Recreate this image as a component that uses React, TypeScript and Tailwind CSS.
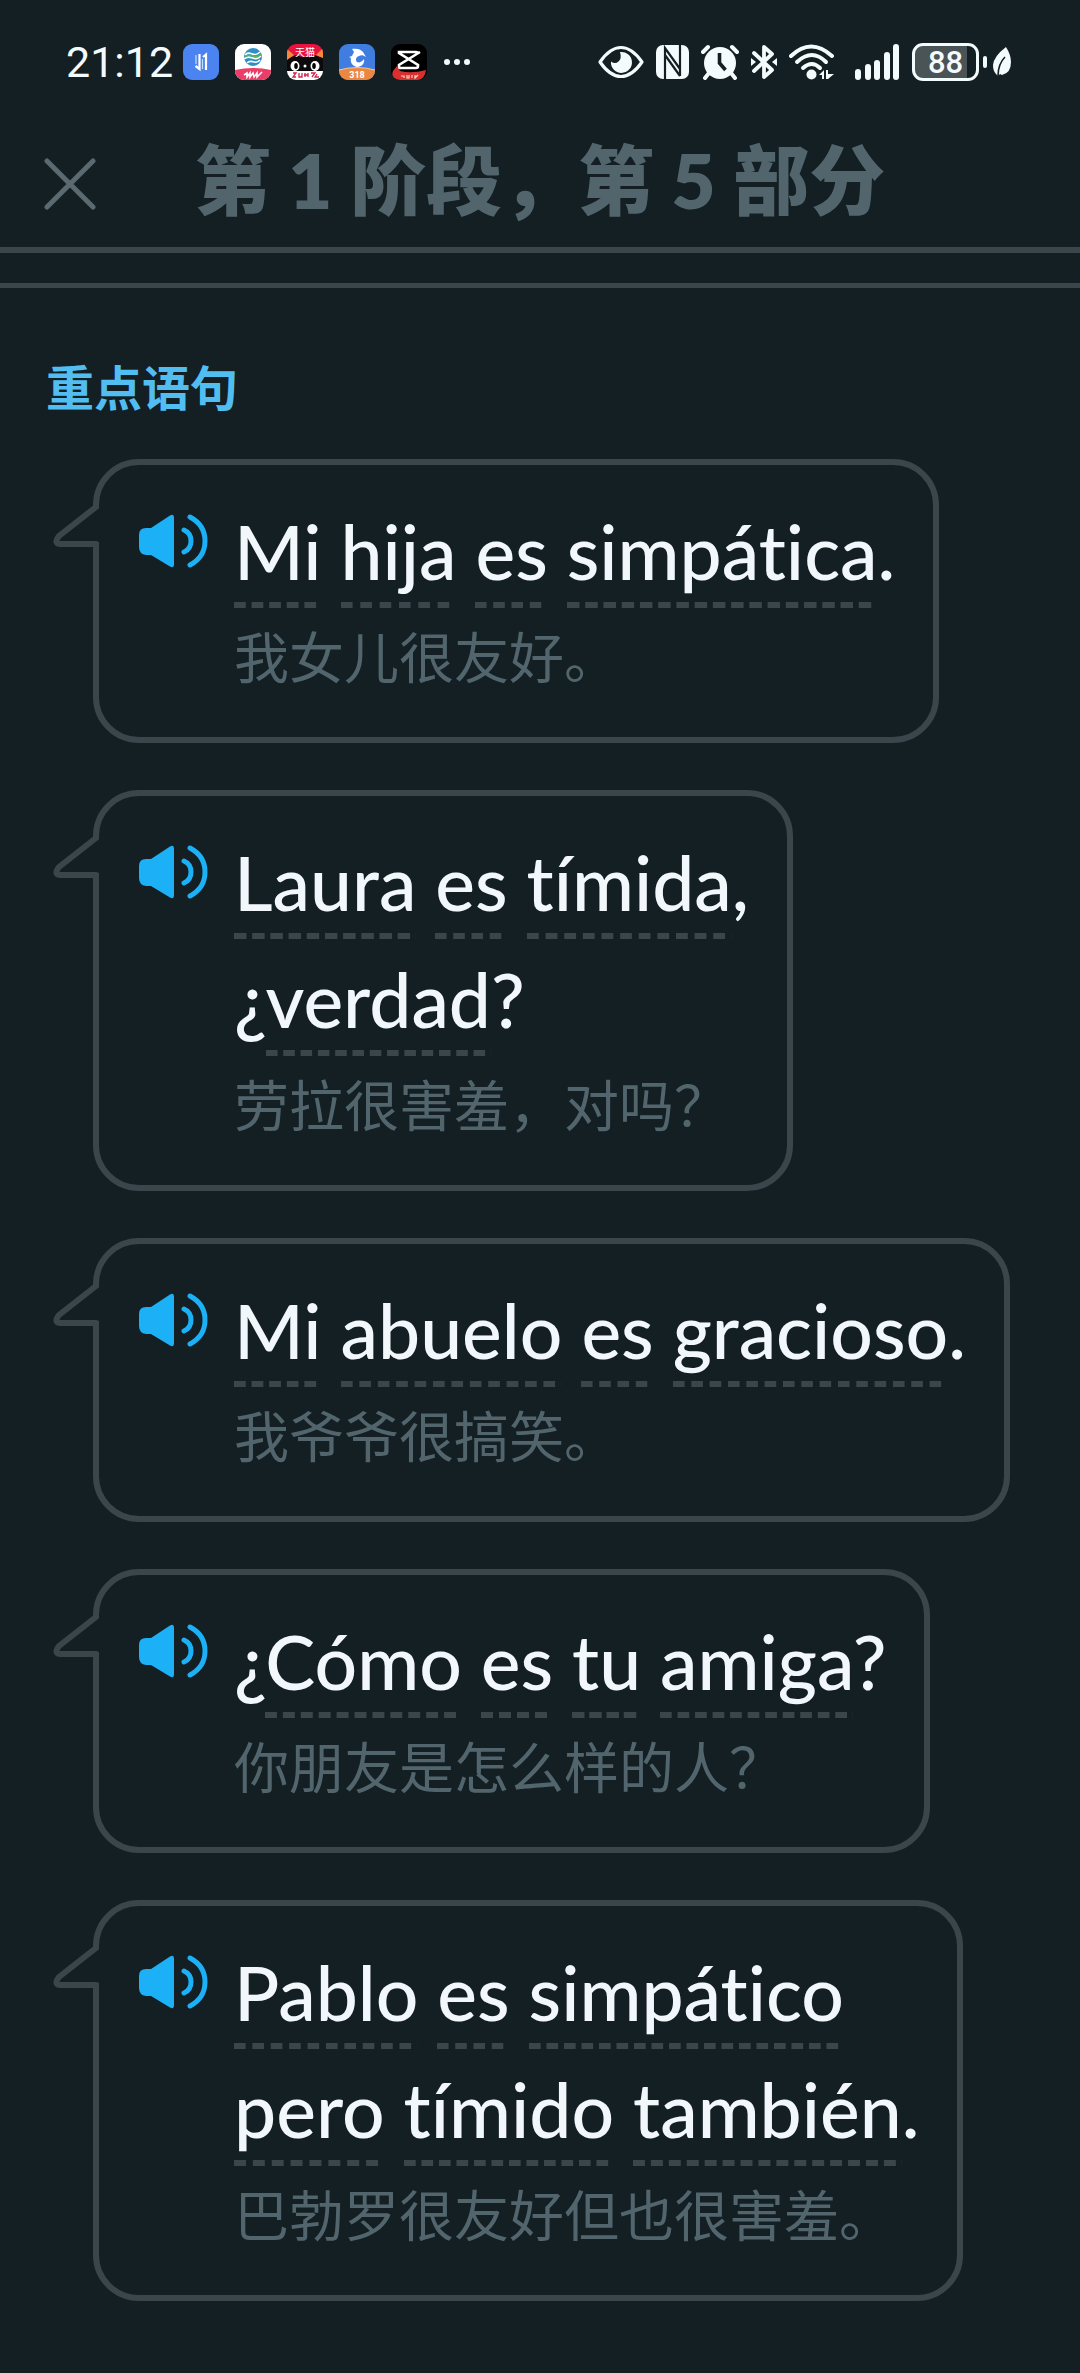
import type { ReactNode } from "react";

type Word = { text: string; hint: boolean };
type Sentence = { lines: Word[][]; translation: string };

const w = (text: string): Word => ({ text, hint: true });
const p = (text: string): Word => ({ text, hint: false });

const sentences: Sentence[] = [
  {
    lines: [[w("Mi"), p(" "), w("hija"), p(" "), w("es"), p(" "), w("simpática"), p(".")]],
    translation: "我女儿很友好。",
  },
  {
    lines: [
      [w("Laura"), p(" "), w("es"), p(" "), w("tímida"), p(",")],
      [p("¿"), w("verdad"), p("?")],
    ],
    translation: "劳拉很害羞，对吗？",
  },
  {
    lines: [[w("Mi"), p(" "), w("abuelo"), p(" "), w("es"), p(" "), w("gracioso"), p(".")]],
    translation: "我爷爷很搞笑。",
  },
  {
    lines: [[p("¿"), w("Cómo"), p(" "), w("es"), p(" "), w("tu"), p(" "), w("amiga"), p("?")]],
    translation: "你朋友是怎么样的人？",
  },
  {
    lines: [
      [w("Pablo"), p(" "), w("es"), p(" "), w("simpático")],
      [w("pero"), p(" "), w("tímido"), p(" "), w("también"), p(".")],
    ],
    translation: "巴勃罗很友好但也很害羞。",
  },
];

function AppBadge({ className, children }: { className: string; children: ReactNode }) {
  return (
    <svg viewBox="0 0 36 36" aria-hidden="true" className={`size-9 shrink-0 rounded-[9px] ${className}`}>
      {children}
    </svg>
  );
}

function StatusBar() {
  return (
    <div className="flex h-[124px] items-center justify-between pr-[69px] pl-[66px] text-[#f4fbfd]">
      <div className="flex items-center gap-4">
        <span className="-mr-1.5 font-['Roboto',sans-serif] text-[43px] leading-none">21:12</span>
        <AppBadge className="bg-[#4b84f0]">
          <path d="M16.500 10v15l-4-3M20 13l3-2.500V26" fill="none" stroke="#fff" strokeWidth="2.200" />
          <path d="M13 11v9M19.500 15v10" fill="none" stroke="#c8dcff" strokeWidth="1.200" />
        </AppBadge>
        <AppBadge className="bg-white">
          <circle cx="18" cy="13" r="9" fill="#2f8fc4" />
          <path d="M10 11c5-6 8 4 15-3M9 15c6-6 10 4 17-3M12 19c5-5 8 3 13-3" fill="none" stroke="#fff" strokeWidth="1.600" />
          <path d="M10 13c6-6 9 4 16-3" fill="none" stroke="#58b947" strokeWidth="1.500" />
          <path d="M0 26q18-4 36 0v10H0z" fill="#ec3d68" />
          <path d="M9 31l3-2v4l3-4v4l3-4 1 4 3-4v4l5-5" fill="none" stroke="#fff" strokeWidth="1.600" />
        </AppBadge>
        <AppBadge className="bg-[#0b0b0b]">
          <path d="M0 0h36v14l-9-3q-9 4-18 0L0 15z" fill="#e8143f" />
          <path d="M0 5l7 6-7 5zM36 4l-7 7 7 3z" fill="#f08a3c" />
          <text x="18" y="12" textAnchor="middle" fontSize="10" fill="#fff" fontFamily="Noto Sans CJK SC, sans-serif">天猫</text>
          <ellipse cx="8" cy="22" rx="4.500" ry="5" fill="#fff" />
          <ellipse cx="28" cy="22" rx="4.500" ry="5" fill="#fff" />
          <ellipse cx="9" cy="22" rx="1.800" ry="3" fill="#000" />
          <ellipse cx="27" cy="22" rx="1.800" ry="3" fill="#000" />
          <circle cx="18" cy="22" r="1.500" fill="#fff" />
          <path d="M0 27h36v9H0z" fill="#fff" />
          <path d="M6 29h3l-3 4h3M12 29v4h3v-4M18 29v4M17 31h4M21 29v4M24 29h4l-3 4M30 30l-2 3h4" fill="none" stroke="#d4234f" strokeWidth="1.300" />
        </AppBadge>
        <AppBadge className="bg-[#3f7de0]">
          <path d="M13 5c4-1 9 0 11 3 1 2 2 3 3 5-3-2-5-2-7-1-3 1-4 4-2 6 2 1 5 0 7-3 1 4-2 8-7 8-5-1-7-5-6-9l-2-1 3-1 2-4z" fill="#fff" />
          <path d="M0 26q18-5 36 0v10H0z" fill="#ec8742" />
          <path d="M0 26q18-5 36 0" fill="none" stroke="#f7c98b" strokeWidth="1" />
          <text x="18" y="34" textAnchor="middle" fontSize="9" fontWeight="700" fill="#fff" fontFamily="Roboto, sans-serif">318</text>
        </AppBadge>
        <AppBadge className="bg-black">
          <path d="M29 8l-21 13v3h17q2 0 2-2v-1L8 9V8h17q2 0 2 2" fill="none" stroke="#fff" strokeWidth="2.600" />
          <path d="M2 27l4-5 3 5q12 3 26-1-1 8-7 10H3q-3-4-1-9z" fill="#d92f2f" />
          <path d="M10 32h3v2M16 31v3h2v-3M21 31v3M24 31v3l3-3" fill="none" stroke="#fbd6c0" strokeWidth="1.200" />
        </AppBadge>
        <svg viewBox="0 0 28 8" aria-hidden="true" className="h-2 w-7" fill="currentColor">
          <circle cx="4" cy="4" r="3" />
          <circle cx="14" cy="4" r="3" />
          <circle cx="24" cy="4" r="3" />
        </svg>
      </div>
      <div className="flex items-center gap-3">
        <svg viewBox="0 0 46 34" aria-hidden="true" className="h-[34px] w-[46px]">
          <path d="M2 17Q12 2.500 23 2.500T44 17Q34 31.500 23 31.500T2 17Z" fill="none" stroke="currentColor" strokeWidth="3.200" strokeLinejoin="round" />
          <path d="M22 7a10.500 10.500 0 1 1-9 9.500q4 3 7.500 0t1.500-9.500z" fill="currentColor" />
        </svg>
        <svg viewBox="0 0 33 34" aria-hidden="true" className="h-[34px] w-[33px]">
          <rect width="33" height="34" rx="7" fill="currentColor" />
          <path d="M9 34V3l15 21V0M9 12v22M24 31L9 10M24 31V0" fill="none" stroke="#131f23" strokeWidth="2.200" />
        </svg>
        <svg viewBox="0 0 38 36" aria-hidden="true" className="h-9 w-[38px]">
          <circle cx="19" cy="19" r="16" fill="currentColor" />
          <path d="M2 8l5-5M36 8l-5-5M8 29l-4 5M30 29l4 5" fill="none" stroke="currentColor" strokeWidth="4" strokeLinecap="round" />
          <path d="M18.500 9v10l6 7" fill="none" stroke="#131f23" strokeWidth="3.600" />
        </svg>
        <svg viewBox="0 0 26 36" aria-hidden="true" className="h-9 w-[26px]">
          <path d="M3 9l18 17-8 7V3l8 7L3 27" fill="none" stroke="currentColor" strokeWidth="3.800" strokeLinejoin="round" strokeLinecap="round" />
          <path d="M0 14l5 4-5 4zM26 14l-5 4 5 4z" fill="currentColor" />
        </svg>
        <svg viewBox="0 0 46 36" aria-hidden="true" className="mr-2 h-9 w-[46px]">
          <g fill="none" stroke="currentColor" strokeWidth="4" strokeLinecap="round">
            <path d="M2 12q20-19 41 0" />
            <path d="M8 18q15-14 29 0" />
            <path d="M14 24q9-8 17 0" />
          </g>
          <circle cx="22.500" cy="30.500" r="5" fill="currentColor" />
          <path d="M30 31l5-5v9h-2v-4zM37 26h2v4h6l-6 5h-2z" fill="currentColor" />
        </svg>
        <svg viewBox="0 0 45 36" aria-hidden="true" className="h-9 w-[45px]" fill="currentColor">
          <rect x="0" y="25" width="6" height="11" rx="3" />
          <rect x="10" y="20" width="6" height="16" rx="3" />
          <rect x="19" y="16" width="6" height="20" rx="3" />
          <rect x="29" y="8" width="6" height="28" rx="3" />
          <rect x="38" y="0" width="6" height="36" rx="3" />
        </svg>
        <div className="flex items-center gap-1.5">
          <div className="flex items-center gap-1">
            <div className="flex h-[38px] w-[67px] items-center justify-center rounded-[11px] border-[3px] border-current bg-linear-to-r from-[#4a5356] from-85% to-[#131f23] to-85% font-['Roboto',sans-serif] text-[31px] leading-none font-medium">
              88
            </div>
            <div className="h-3 w-1 rounded-full bg-current" />
          </div>
          <svg viewBox="0 0 18 30" aria-hidden="true" className="h-[30px] w-[18px]">
            <path d="M13 0q5 8 5 15 0 11-9 13l-2-1-2 2-2-2Q0 24 0 18 1 9 13 0z" fill="currentColor" />
            <path d="M12 10Q5 17 5 29" fill="none" stroke="#131f23" strokeWidth="1.600" />
          </svg>
        </div>
      </div>
    </div>
  );
}

function SpeakerIcon() {
  return (
    <svg viewBox="0 0 69 54" aria-hidden="true" className="h-[54px] w-[69px]">
      <path d="M7 14h5L31 1.500q4-2 4 2v47q0 4-4 2L12 41H7q-7-1-7-8V21q0-7 7-7z" fill="#1cb0f6" />
      <path d="M45 16q7 3 7 11t-7 11M51 3q15 8 15 24T51 51" fill="none" stroke="#1cb0f6" strokeWidth="5" strokeLinecap="round" />
    </svg>
  );
}

function BubbleTail() {
  return (
    <svg viewBox="0 0 50 50" aria-hidden="true" className="absolute top-[37px] -left-12 size-[50px]">
      <rect x="42" y="6" width="7" height="34" fill="#131f23" />
      <path d="M45 5L8 34Q2 42 10 42H45" fill="#131f23" stroke="#3a464c" strokeWidth="6" strokeLinejoin="round" strokeLinecap="round" />
    </svg>
  );
}

function SentenceBubble({ lines, translation }: Sentence) {
  return (
    <li className="relative flex w-fit items-start gap-[26px] rounded-[46px] border-[6px] border-[#3a464c] pt-7 pr-[38px] pb-[47px] pl-10">
      <BubbleTail />
      <button type="button" aria-label="播放" className="mt-[21px] shrink-0">
        <SpeakerIcon />
      </button>
      <div>
        <p lang="es" className="text-[75px] leading-[117px] font-medium text-[#f1f7fb] [font-variant-ligatures:none]">
          {lines.map((line, i) => (
            <span key={i} className="block">
              {line.map((word, j) =>
                word.hint ? (
                  <span
                    key={j}
                    className="bg-[linear-gradient(to_right,#3a464c_12px,transparent_12px)] bg-[length:18px_6px] bg-bottom-left pb-3 [background-repeat:round_no-repeat]"
                  >
                    {word.text}
                  </span>
                ) : (
                  word.text
                ),
              )}
            </span>
          ))}
        </p>
        <p className="mt-2 font-['Noto_Sans_CJK_SC',sans-serif] text-[55px] leading-[72px] text-[#52656d]">{translation}</p>
      </div>
    </li>
  );
}

export default function App() {
  return (
    <div lang="zh-CN" className="min-h-screen bg-[#131f23] pb-[70px] font-['Lato','Noto_Sans_CJK_SC',sans-serif]">
      <StatusBar />
      <header className="relative flex h-[129px] items-center justify-center border-b-[6px] border-[#3a464c] pb-3">
        <button type="button" aria-label="关闭" className="absolute top-[34px] left-11">
          <svg viewBox="0 0 52 52" aria-hidden="true" className="size-[52px]">
            <path d="M3 3l46 46M49 3L3 49" fill="none" stroke="#5b6a70" strokeWidth="5" strokeLinecap="round" />
          </svg>
        </button>
        <h1 className="text-[76px] leading-none font-extrabold text-[#52656d]">第 1 阶段，第 5 部分</h1>
      </header>
      <main className="mt-[30px] border-t-[5px] border-[#3a464c] pt-16">
        <h2 className="pl-[46px] text-[48px] leading-[72px] font-bold text-[#51bdf0]">重点语句</h2>
        <ul className="mt-[35px] flex flex-col gap-[47px] pl-[93px]">
          {sentences.map((s) => (
            <SentenceBubble key={s.translation} {...s} />
          ))}
        </ul>
      </main>
    </div>
  );
}
